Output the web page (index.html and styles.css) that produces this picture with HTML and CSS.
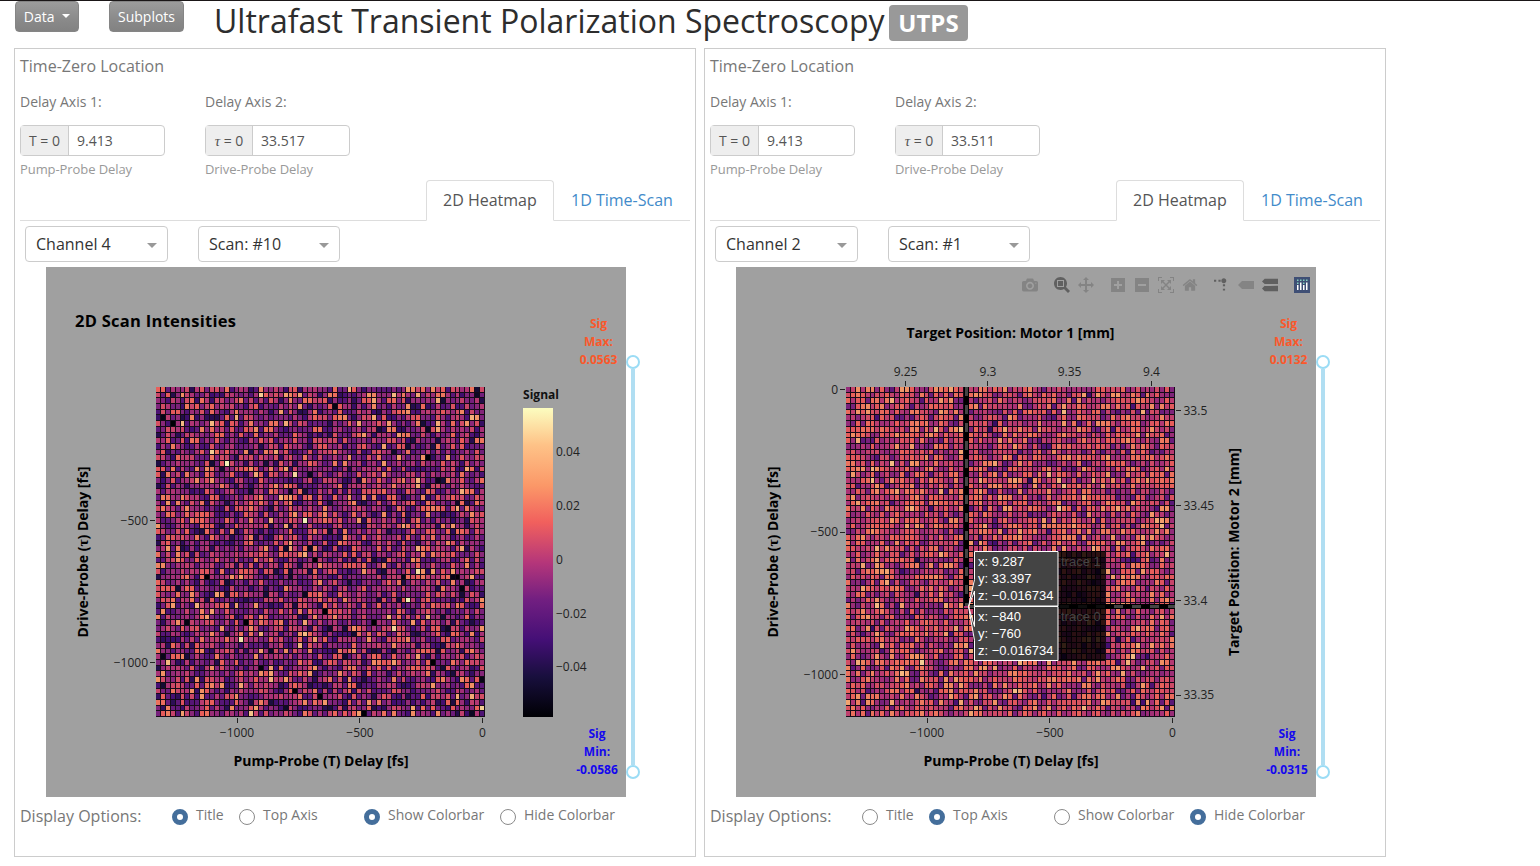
FILE: index.html
```html
<!DOCTYPE html>
<html lang="en">
<head>
<meta charset="utf-8">
<title>Ultrafast Transient Polarization Spectroscopy</title>
<link rel="stylesheet" href="styles.css">
</head>
<body>
<header class="topbar">
  <button class="btn btn-data">Data <span class="caret"></span></button>
  <button class="btn btn-sub">Subplots</button>
  <h1 class="title">Ultrafast Transient Polarization Spectroscopy</h1><span class="badge">UTPS</span>
</header>
<main class="panels">
  <section class="panel">
    <div class="heading">Time-Zero Location</div>
    <div class="fields">
      <div class="field"><div class="label">Delay Axis 1:</div><div class="group"><span class="addon">T = 0</span><span class="value">9.413</span></div><div class="help">Pump-Probe Delay</div></div>
      <div class="field"><div class="label">Delay Axis 2:</div><div class="group"><span class="addon addon-tau"><i>τ</i> = 0</span><span class="value">33.517</span></div><div class="help">Drive-Probe Delay</div></div>
    </div>
    <nav class="tabs"><span class="tab active">2D Heatmap</span><span class="tab">1D Time-Scan</span></nav>
    <div class="selects"><div class="select">Channel 4<span class="arrow"></span></div><div class="select scan">Scan: #10<span class="arrow"></span></div></div>
    <div class="graph">
      <svg class="plot" width="580" height="530" viewBox="0 0 580 530">
        <defs><linearGradient id="magma" x1="0" y1="1" x2="0" y2="0">
          <stop offset="0" stop-color="#000004"/><stop offset=".13" stop-color="#180f3d"/><stop offset=".25" stop-color="#440f76"/><stop offset=".38" stop-color="#721f81"/><stop offset=".5" stop-color="#b5367a"/><stop offset=".63" stop-color="#f1605d"/><stop offset=".75" stop-color="#fb9868"/><stop offset=".88" stop-color="#fec287"/><stop offset="1" stop-color="#fcfdbf"/>
        </linearGradient></defs>
        <text class="ptitle" x="29" y="60" textLength="161">2D Scan Intensities</text>
        <g class="cells" data-seed="41" data-mean=".455" data-spread=".155"></g>
        <path class="tick" d="M191.500 451v5M313.500 451v5M436.500 451v5M104 253.500h5M104 395.500h5"/>
        <g class="num"><text class="mid" x="191" y="470">−1000</text><text class="mid" x="314" y="470">−500</text><text class="mid" x="436.500" y="470">0</text>
        <text class="end" x="102" y="258">−500</text><text class="end" x="102" y="400">−1000</text>
        <text x="510" y="189">0.04</text><text x="510" y="243">0.02</text><text x="510" y="297">0</text><text x="510" y="351">−0.02</text><text x="510" y="404">−0.04</text></g>
        <text class="axis mid" x="275" y="499" textLength="175" lengthAdjust="spacingAndGlyphs">Pump-Probe (T) Delay [fs]</text>
        <text class="axis mid" transform="translate(42 285) rotate(-90)" textLength="171" lengthAdjust="spacingAndGlyphs">Drive-Probe (<tspan class="tau">τ</tspan>) Delay [fs]</text>
        <text class="cbt" x="477" y="132" textLength="36">Signal</text>
        <rect x="477" y="141" width="30" height="309" fill="url(#magma)"/>
        <g class="sig max"><text x="552.500" y="61">Sig</text><text x="552.500" y="79">Max:</text><text x="552.500" y="97">0.0563</text></g>
        <g class="sig min"><text x="551" y="471">Sig</text><text x="551" y="489">Min:</text><text x="551" y="507">-0.0586</text></g>
      </svg>
      <div class="slider"><span class="handle"></span><span class="rail"></span><span class="handle"></span></div>
    </div>
    <div class="options"><span class="olabel">Display Options:</span><span class="radio on">Title</span><span class="radio r2">Top Axis</span><span class="radio r3 on">Show Colorbar</span><span class="radio r4">Hide Colorbar</span></div>
  </section>
  <section class="panel">
    <div class="heading">Time-Zero Location</div>
    <div class="fields">
      <div class="field"><div class="label">Delay Axis 1:</div><div class="group"><span class="addon">T = 0</span><span class="value">9.413</span></div><div class="help">Pump-Probe Delay</div></div>
      <div class="field"><div class="label">Delay Axis 2:</div><div class="group"><span class="addon addon-tau"><i>τ</i> = 0</span><span class="value">33.511</span></div><div class="help">Drive-Probe Delay</div></div>
    </div>
    <nav class="tabs"><span class="tab active">2D Heatmap</span><span class="tab">1D Time-Scan</span></nav>
    <div class="selects"><div class="select">Channel 2<span class="arrow"></span></div><div class="select scan">Scan: #1<span class="arrow"></span></div></div>
    <div class="graph">
      <svg class="plot" width="580" height="530" viewBox="0 0 580 530">
        <g class="modebar">
          <svg x="286" y="10" width="16" height="16" viewBox="0 0 1000 1000"><path transform="matrix(1 0 0 -1 0 850)" d="m500 450c-83 0-150-67-150-150 0-83 67-150 150-150 83 0 150 67 150 150 0 83-67 150-150 150z m400 150h-120c-16 0-34 13-39 29l-31 93c-6 15-23 28-40 28h-340c-16 0-34-13-39-28l-31-94c-6-15-23-28-40-28h-120c-55 0-100-45-100-100v-450c0-55 45-100 100-100h800c55 0 100 45 100 100v450c0 55-45 100-100 100z m-400-550c-138 0-250 112-250 250 0 138 112 250 250 250 138 0 250-112 250-250 0-138-112-250-250-250z m365 380c-19 0-35 16-35 35 0 19 16 35 35 35 19 0 35-16 35-35 0-19-16-35-35-35z"/></svg>
          <svg class="lit" x="318" y="10" width="16" height="16" viewBox="0 0 1000 1000"><path transform="matrix(1 0 0 -1 0 850)" d="m1000-25l-250 251c40 63 63 138 63 218 0 224-182 406-407 406-224 0-406-182-406-406s183-406 407-406c80 0 155 22 218 62l250-250 125 125z m-812 250l0 438 437 0 0-438-437 0z m62 375l313 0 0-312-313 0 0 312z"/></svg>
          <svg x="342" y="10" width="16" height="16" viewBox="0 0 1000 1000"><path transform="matrix(1 0 0 -1 0 850)" d="m1000 350l-187 188 0-125-250 0 0 250 125 0-188 187-187-187 125 0 0-250-250 0 0 125-188-188 186-187 0 125 252 0 0-250-125 0 187-188 188 188-125 0 0 250 250 0 0-126 187 188z"/></svg>
          <svg x="375" y="10" width="14" height="16" viewBox="0 0 875 1000"><path transform="matrix(1 0 0 -1 0 850)" d="m1 787l0-875 875 0 0 875-875 0z m687-500l-187 0 0-187-125 0 0 187-188 0 0 125 188 0 0 187 125 0 0-187 187 0 0-125z"/></svg>
          <svg x="399" y="10" width="14" height="16" viewBox="0 0 875 1000"><path transform="matrix(1 0 0 -1 0 850)" d="m0 788l0-876 875 0 0 876-875 0z m688-500l-500 0 0 125 500 0 0-125z"/></svg>
          <svg x="422" y="10" width="16" height="16" viewBox="0 0 1000 1000"><path transform="matrix(1 0 0 -1 0 850)" d="m250 850l-187 0-63 0 0-62 0-188 63 0 0 188 187 0 0 62z m688 0l-188 0 0-62 188 0 0-188 62 0 0 188 0 62-62 0z m-875-938l0 188-63 0 0-188 0-62 63 0 187 0 0 62-187 0z m875 188l0-188-188 0 0-62 188 0 62 0 0 62 0 188-62 0z m-125 188l-1 0-93-94-156 156 156 156 92-93 2 0 0 250-250 0 0-2 93-92-156-156-156 156 94 92 0 2-250 0 0-250 0 0 93 93 157-156-157-156-93 94 0 0 0-250 250 0 0 0-94 93 156 157 156-157-93-93 0 0 250 0 0 250z"/></svg>
          <svg x="446.500" y="10" width="15" height="16" viewBox="0 0 929 1000"><path transform="matrix(1 0 0 -1 0 850)" d="m786 296v-267q0-15-11-26t-25-10h-214v214h-143v-214h-214q-15 0-25 10t-11 26v267q0 1 0 2t0 2l321 264 321-264q1-1 1-4z m124 39l-34-41q-5-5-12-6h-2q-7 0-12 3l-386 322-386-322q-7-4-13-4-7 2-12 7l-35 41q-4 5-3 13t6 12l401 334q18 15 42 15t43-15l136-114v109q0 8 5 13t13 5h107q8 0 13-5t5-13v-227l122-102q5-5 6-12t-4-13z"/></svg>
          <svg class="lit" x="478" y="10" width="16" height="16" viewBox="0 0 1000 1000"><path transform="matrix(1.5 0 0 -1.5 0 850)" d="M512 409c0-57-46-104-103-104-57 0-104 47-104 104 0 57 47 103 104 103 57 0 103-46 103-103z m-327-39l92 0 0 77-92 0z m-185 0l92 0 0 77-92 0z m370-186l92 0 0 77-92 0z m0-184l92 0 0 77-92 0z"/></svg>
          <svg x="502" y="10" width="16" height="16" viewBox="0 0 1500 1500"><path transform="translate(0 250) matrix(1 0 0 -1 0 850)" d="m375 725l0 0-375-375 375-374 0-1 1125 0 0 750-1125 0z"/></svg>
          <svg class="lit" x="526" y="10" width="16" height="16" viewBox="0 0 1125 1125"><path transform="translate(0 62) matrix(1 0 0 -1 0 850)" d="m187 786l0 2-187-188 188-187 0 0 937 0 0 373-938 0z m0-499l0 1-187-188 188-188 0 0 937 0 0 376-938-1z"/></svg>
          <g transform="translate(558 10)"><rect class="logo" width="16" height="16"/><path class="bars" d="M3 8h1.500v5H3zM6 5.500h1.500V13H6zM9 8h1.500v5H9zM12 5.500h1.500V13H12z"/><path class="dots" d="M3 2.500h1.500v1.500H3zM3 5.500h1.500v1.500H3zM6 2.500h1.500v1.500H6zM9 2.500h1.500v1.500H9zM9 5.500h1.500v1.500H9zM12 2.500h1.500v1.500H12z"/></g>
        </g>
        <text class="axis mid" x="274.500" y="71" textLength="208" lengthAdjust="spacingAndGlyphs">Target Position: Motor 1 [mm]</text>
        <g class="cells" data-seed="97" data-mean=".55" data-spread=".115"></g>
        <path class="tick" d="M191.500 451v5M313.500 451v5M436.500 451v5M104 122.500h5M104 265.500h5M104 407.500h5M169.500 114v5M251.500 114v5M333.500 114v5M415.500 114v5M440 143.500h5M440 238.500h5M440 333.500h5M440 428.500h5"/>
        <g class="num"><text class="mid" x="191" y="470">−1000</text><text class="mid" x="314" y="470">−500</text><text class="mid" x="436.500" y="470">0</text>
        <text class="end" x="102" y="127">0</text><text class="end" x="102" y="269">−500</text><text class="end" x="102" y="412">−1000</text>
        <text class="mid" x="169.500" y="109">9.25</text><text class="mid" x="252" y="109">9.3</text><text class="mid" x="333.500" y="109">9.35</text><text class="mid" x="415.500" y="109">9.4</text>
        <text x="447.500" y="148">33.5</text><text x="447.500" y="243">33.45</text><text x="447.500" y="338">33.4</text><text x="447.500" y="432">33.35</text></g>
        <text class="axis mid" x="275" y="499" textLength="175" lengthAdjust="spacingAndGlyphs">Pump-Probe (T) Delay [fs]</text>
        <text class="axis mid" transform="translate(42 285) rotate(-90)" textLength="171" lengthAdjust="spacingAndGlyphs">Drive-Probe (<tspan class="tau">τ</tspan>) Delay [fs]</text>
        <text class="axis mid" transform="translate(503 285) rotate(-90)" textLength="208" lengthAdjust="spacingAndGlyphs">Target Position: Motor 2 [mm]</text>
        <path class="spike-bg" d="M230.500 120V339M234 339.500H439"/><path class="spike" d="M230.500 120V339M234 339.500H439"/>
        <rect class="trace" x="322" y="284" width="47" height="110"/>
        <text class="tname" x="325" y="299">trace 1</text><text class="tname" x="325" y="354">trace 0</text>
        <path class="tip" d="M238.500 284.500h83.500v54.500h-83.500v-15l-6 15.500 6-27z"/>
        <path class="tip" d="M238.500 339.500h83.500v54h-83.500v-20l-6-34 6 20z"/>
        <g class="tiptext"><text x="242" y="299">x: 9.287</text><text x="242" y="316">y: 33.397</text><text x="242" y="333">z: −0.016734</text><text x="242" y="354">x: −840</text><text x="242" y="371">y: −760</text><text x="242" y="388">z: −0.016734</text></g>
        <g class="sig max"><text x="552.500" y="61">Sig</text><text x="552.500" y="79">Max:</text><text x="552.500" y="97">0.0132</text></g>
        <g class="sig min"><text x="551" y="471">Sig</text><text x="551" y="489">Min:</text><text x="551" y="507">-0.0315</text></g>
      </svg>
      <div class="slider"><span class="handle"></span><span class="rail"></span><span class="handle"></span></div>
    </div>
    <div class="options"><span class="olabel">Display Options:</span><span class="radio">Title</span><span class="radio r2 on">Top Axis</span><span class="radio r3">Show Colorbar</span><span class="radio r4 on">Hide Colorbar</span></div>
  </section>
</main>
<script src="heatmap.js"></script>
</body>
</html>
```
FILE: styles.css
```css
*, *::before { box-sizing: border-box; }
body { margin: 0; height: 866px; overflow: hidden; background: #fff; border-top: 1px solid #1a1617; font-family: "Open Sans", "Noto Sans", sans-serif; color: #777; }
.topbar { display: flex; height: 47px; padding-left: 15px; align-items: flex-start; }
.btn { height: 31px; padding: 0; border: 1px solid #858585; border-radius: 4px; background: linear-gradient(#9c9c9c, #8a8a8a 60%, #828282); color: #fff; font: 14px/26px "Open Sans", sans-serif; }
.btn-data { width: 64px; }
.btn-sub { width: 75px; margin-left: 30px; }
.caret { display: inline-block; margin-left: 4px; vertical-align: 4px; border: 4px solid transparent; border-top-color: #fff; border-bottom: 0; }
.title { width: 675px; margin: -1px 0 0 30px; font-size: 32px; line-height: 42px; font-weight: 400; color: #2d2d2d; white-space: nowrap; }
.badge { height: 36px; width: 79px; margin-top: 4px; border-radius: 4px; background: #999; color: #fff; font-weight: 700; font-size: 24px; line-height: 36px; text-align: center; }
.panels { display: flex; gap: 8px; padding-left: 14px; }
.panel { width: 682px; height: 809px; border: 1px solid #ccc; padding: 0 5px; }
.heading { height: 34px; line-height: 35px; font-size: 16px; }
.fields { display: flex; gap: 40px; height: 97px; }
.field { width: 145px; }
.label { height: 42px; line-height: 37px; font-size: 14px; }
.group { display: flex; height: 31px; border: 1px solid #ccc; border-radius: 4px; font-size: 14px; line-height: 30px; color: #555; }
.addon { width: 48px; background: #eee; border-right: 1px solid #ccc; text-align: center; }
.addon-tau { width: 47px; }
.addon i { font-family: "Liberation Serif", serif; font-size: 15px; }
.value { padding-left: 8px; }
.help { height: 24px; line-height: 26px; font-size: 13px; color: #999; letter-spacing: -.08px; }
.tabs { display: flex; height: 41px; padding-left: 406px; border-bottom: 1px solid #ddd; font-size: 16px; line-height: 40px; }
.tab { height: 40px; padding-left: 17px; color: #428bca; white-space: nowrap; }
.tab.active { width: 128px; height: 41px; padding-left: 16px; border: 1px solid #ddd; border-bottom-color: #fff; border-radius: 4px 4px 0 0; background: #fff; color: #555; line-height: 38px; }
.selects { display: flex; gap: 30px; height: 46px; padding: 5px; }
.select { display: flex; justify-content: space-between; align-items: center; width: 143px; height: 36px; padding: 0 10px; border: 1px solid #ccc; border-radius: 4px; color: #333; font-size: 16px; line-height: 34px; }
.scan { width: 142px; }
.arrow { border: 5px solid transparent; border-top-color: #999; border-bottom: 0; margin-top: 2px; }
.graph { display: flex; height: 530px; padding-left: 26px; }
.plot { display: block; background: #a0a0a0; }
.slider { display: flex; flex-direction: column; align-items: center; width: 14px; height: 424px; margin-top: 88px; }
.handle { width: 14px; height: 14px; border: 2px solid #9bdcf5; border-radius: 50%; background: #fff; }
.rail { flex: 1; width: 4px; background: #b0def2; }
.options { display: flex; height: 38px; align-items: center; font-size: 14px; }
.olabel { width: 152px; font-size: 16px; }
.radio { display: flex; align-items: center; gap: 8px; width: 67px; height: 20px; line-height: 18px; margin-top: -2px; white-space: nowrap; }
.radio::before { content: ""; flex: none; width: 16px; height: 16px; margin-top: 4px; border: 1px solid #8a8a8a; border-radius: 50%; background: #fff; }
.radio.on::before { border: 5px solid #446e9b; }
.r2 { width: 125px; }
.r3 { width: 136px; }
text { font-family: "Open Sans", sans-serif; fill: #111; }
.ptitle { font-size: 16.500px; font-weight: 700; fill: #000; }
.num text { font-size: 12px; fill: #222; }
.mid { text-anchor: middle; }
.end { text-anchor: end; }
.axis { font-size: 13.500px; font-weight: 700; fill: #000; }
.tau { font-family: "Liberation Serif", serif; font-weight: 700; font-size: 15px; }
.cbt { font-size: 12px; font-weight: 700; }
.tick { stroke: #222; fill: none; }
.sig text { font-size: 12px; font-weight: 700; text-anchor: middle; }
.max text { fill: #fa582b; }
.min text { fill: #1408ee; }
.spike-bg { stroke: #000; stroke-width: 5; fill: none; }
.spike { stroke: #444; stroke-width: 3; stroke-dasharray: 9; fill: none; }
.trace { fill: #000; fill-opacity: .8; }
.tname { font: 13px "Liberation Sans", sans-serif; fill: #444; }
.tip { fill: #444; stroke: #fff; }
.tiptext text { font: 13px "Liberation Sans", sans-serif; fill: #fff; }
.modebar path { fill: #444; fill-opacity: .3; }
.modebar .lit path { fill-opacity: .7; }
.modebar .logo { fill: #3f4f75; }
.modebar .bars { fill: #fff; fill-opacity: 1; }
.modebar .dots { fill: #80cfbe; fill-opacity: 1; }
```
FILE: heatmap.js
```js
const NS = 'http://www.w3.org/2000/svg';
const scale = [[0,0,4],[24,15,61],[68,15,118],[114,31,129],[181,54,122],[241,96,93],[251,152,104],[254,194,135],[252,253,191]];
const COLS = 67, ROWS = 58, W = 329, H = 330, X = 110, Y = 120;

function color(v) {
  const t = Math.min(.999, Math.max(0, v)) * 8, i = Math.floor(t), f = t - i;
  return 'rgb(' + scale[i].map((c, k) => Math.round(c * .96 + (scale[i + 1][k] - c) * f * .96)).join() + ')';
}

document.querySelectorAll('.cells').forEach(g => {
  let s = +g.dataset.seed;
  const rnd = () => (s = (s * 16807) % 2147483647) / 2147483647;
  for (let i = 0; i < 20; i++) rnd();
  const rect = (x, y, w, h, fill) => {
    const r = document.createElementNS(NS, 'rect');
    Object.entries({ x, y, width: w, height: h, fill }).forEach(([k, v]) => r.setAttribute(k, v));
    g.appendChild(r);
  };
  rect(X, Y, W, H, '#160a18');
  for (let r = 0; r < ROWS; r++) for (let c = 0; c < COLS; c++) {
    const x0 = Math.round(c * W / COLS), x1 = Math.round((c + 1) * W / COLS);
    const y0 = Math.round(r * H / ROWS), y1 = Math.round((r + 1) * H / ROWS);
    const n = Math.sqrt(-2 * Math.log(rnd())) * Math.cos(2 * Math.PI * rnd());
    rect(X + x0, Y + y0, x1 - x0 - 1, y1 - y0 - 1, color(+g.dataset.mean + n * g.dataset.spread));
  }
});
```
